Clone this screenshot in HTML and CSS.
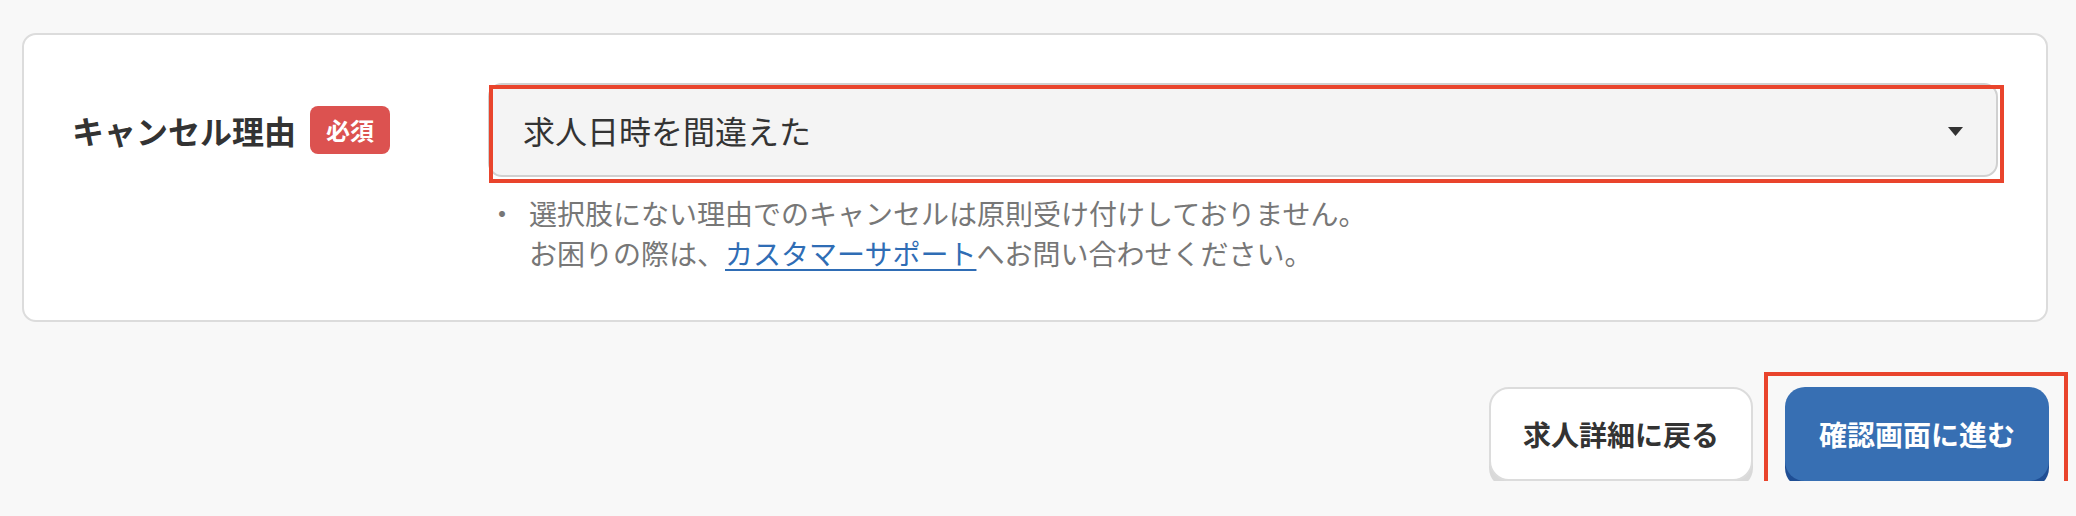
FILE: index.html
```html
<!DOCTYPE html>
<html lang="ja">
<head>
<meta charset="utf-8">
<title>キャンセル理由</title>
<link rel="stylesheet" href="styles.css">
</head>
<body>
<main class="page">
  <section class="card">
    <div class="field">
      <div class="field-label">
        <span class="label-text">キャンセル理由</span>
        <span class="badge">必須</span>
      </div>
      <div class="field-body">
        <div class="select-wrap">
          <div class="select">
            <span class="select-value">求人日時を間違えた</span>
            <svg class="caret" width="15" height="9" viewBox="0 0 15 9"><polygon points="0,0 15,0 7.5,9" fill="#333"/></svg>
          </div>
          <div class="annot annot-select"></div>
        </div>
        <ul class="notes">
          <li>選択肢にない理由でのキャンセルは原則受け付けしておりません。<br>お困りの際は、<a class="link" href="#">カスタマーサポート</a>へお問い合わせください。</li>
        </ul>
      </div>
    </div>
  </section>
  <div class="actions">
    <div class="btn-wrap">
      <button class="btn btn-secondary" type="button">求人詳細に戻る</button>
    </div>
    <div class="btn-wrap">
      <button class="btn btn-primary" type="button">確認画面に進む</button>
      <div class="annot annot-btn"></div>
    </div>
  </div>
</main>
</body>
</html>
```
FILE: styles.css
```css
html, body {
  margin: 0;
  padding: 0;
  background: #f8f8f8;
}
body {
  font-family: "Noto Sans CJK JP", "Noto Sans", sans-serif;
  color: #333;
}
.page {
  padding: 33px 28px 0 22px;
}
.card {
  background: #fff;
  border: 2px solid #dcdcdc;
  border-radius: 14px;
  padding: 48px 48px 47px 48px;
}
.field {
  display: flex;
  align-items: flex-start;
}
.field-label {
  width: 416px;
  flex: 0 0 416px;
  height: 94px;
  display: flex;
  align-items: center;
}
.label-text {
  font-size: 32px;
  font-weight: 700;
  line-height: 48px;
  color: #333;
}
.badge {
  margin-left: 14px;
  background: #dc5250;
  color: #fff;
  font-size: 24px;
  font-weight: 700;
  line-height: 48px;
  height: 48px;
  padding: 0 16px;
  border-radius: 8px;
}
.field-body {
  flex: 1;
}
.select-wrap {
  position: relative;
}
.select {
  height: 94px;
  box-sizing: border-box;
  background: #f4f4f4;
  border: 2px solid #d0d0d0;
  border-radius: 14px;
  padding: 0 33px 0 33px;
  display: flex;
  align-items: center;
  justify-content: space-between;
}
.select-value {
  font-size: 32px;
  color: #333;
  line-height: 48px;
}
.caret {
  display: block;
  margin-top: 2px;
}
.annot {
  position: absolute;
  border: 4px solid #e9442c;
  box-sizing: border-box;
  pointer-events: none;
}
.annot-select {
  top: 2px;
  left: 1px;
  width: calc(100% + 5px);
  height: 98px;
}
.notes {
  list-style: none;
  margin: 16px 0 0 0;
  padding: 0;
}
.notes li {
  position: relative;
  padding-left: 41px;
  font-size: 28px;
  line-height: 40px;
  color: #777;
}
.notes li::before {
  content: "・";
  position: absolute;
  left: 0;
  top: 0;
}
.link {
  color: #2f6db5;
  text-decoration: underline;
  text-underline-offset: 4px;
  text-decoration-thickness: 2px;
}
.actions {
  display: flex;
  justify-content: flex-end;
  align-items: flex-start;
  gap: 32px;
  margin-top: 65px;
  margin-right: -1px;
}
.btn-wrap {
  position: relative;
  width: 264px;
  height: 94px;
}
.btn {
  display: block;
  width: 264px;
  height: 94px;
  box-sizing: border-box;
  border-radius: 20px;
  font-family: "Noto Sans CJK JP", "Noto Sans", sans-serif;
  font-size: 28px;
  font-weight: 700;
  line-height: 40px;
  margin: 0;
  padding: 0;
  cursor: pointer;
}
.btn-secondary {
  background: #fff;
  color: #333;
  border: 2px solid #dcdcdc;
  box-shadow: 0 7px 0 #d9d9d9;
}
.btn-primary {
  background: #376fb3;
  color: #fff;
  border: none;
  box-shadow: 0 7px 0 #1f4e94;
}
.annot-btn {
  top: -15px;
  left: -21px;
  width: 304px;
  height: 128px;
}
```
